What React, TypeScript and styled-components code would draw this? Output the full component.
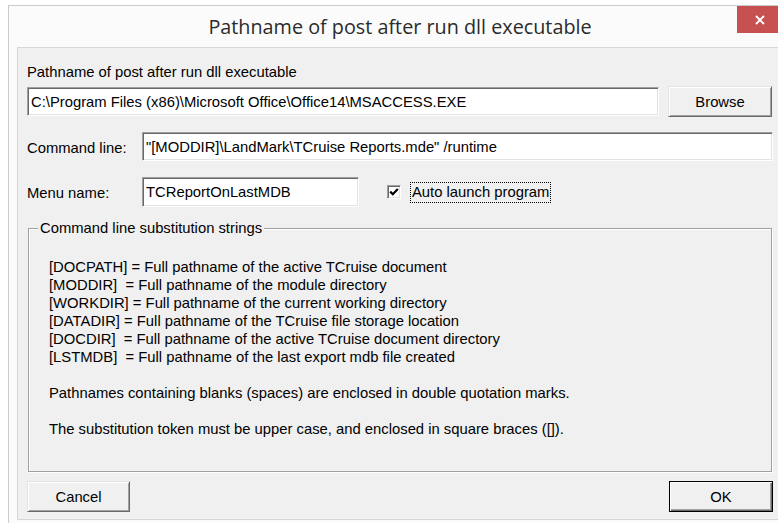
import React from "react";
import styled, { createGlobalStyle } from "styled-components";

const GlobalStyle = createGlobalStyle`
    html, body {
        margin: 0;
        padding: 0;
        background: #ffffff;
        overflow: hidden;
    }
    body {
        font-family: "Liberation Sans", Arial, sans-serif;
        font-size: 14.8px;
        color: #000000;
    }
`;

const Screen = styled.div`
    width: 778px;
    height: 523px;
    padding: 5px 0 0 8px;
    box-sizing: border-box;
    overflow: hidden;
`;

const Window = styled.div`
    width: 784px;
    height: 530px;
    box-sizing: border-box;
    border: 1px solid #cbcbcb;
    background: #fbfbfb;
    padding: 0 8px 8px;
    display: flex;
    flex-direction: column;
`;

const TitleBar = styled.div`
    position: relative;
    height: 41px;
    flex: none;
    display: flex;
    align-items: center;
    justify-content: center;
`;

const Title = styled.span`
    font-family: "Open Sans", "Noto Sans", sans-serif;
    font-size: 19.8px;
    color: #2b2b2b;
`;

// sits over the title bar's right end, like the caption button it is
const CloseButton = styled.div`
    position: absolute;
    top: 0;
    right: 0;
    width: 46px;
    height: 27px;
    background: #c75050;
    display: flex;
    align-items: center;
    justify-content: center;
`;

const Client = styled.div`
    flex: none;
    height: 473px;
    box-sizing: border-box;
    border: 1px solid #d6d6d6;
    background: #f0f0f0;
    padding: 16px 9px 7px;
    display: flex;
    flex-direction: column;
`;

const FieldCaption = styled.div`
    line-height: 17px;
    height: 17px;
    margin-bottom: 5px;
`;

const Row = styled.div<{ $gap?: number }>`
    display: flex;
    align-items: center;
    margin-bottom: ${(p) => p.$gap ?? 15}px;
`;

const RowLabel = styled.div`
    width: 115px;
    flex: none;
    padding-top: 3px;
    line-height: 17px;
`;

const TextBox = styled.input<{ $width?: number; $height?: number }>`
    ${(p) => (p.$width ? `width: ${p.$width}px; flex: none;` : "flex: 1; min-width: 0;")}
    height: ${(p) => p.$height ?? 29}px;
    box-sizing: border-box;
    margin: 0;
    padding: 0 3px;
    font-family: "Liberation Sans", Arial, sans-serif;
    font-size: 14.8px;
    color: #000000;
    background: #ffffff;
    border-style: solid;
    border-width: 1px;
    border-color: #a0a0a0 #ffffff #ffffff #a0a0a0;
    box-shadow: inset 1px 1px 0 #696969, inset -1px -1px 0 #e3e3e3;
    outline: none;
`;

const PushButton = styled.button<{ $default?: boolean; $width?: number }>`
    width: ${(p) => p.$width ?? 104}px;
    height: 31px;
    flex: none;
    box-sizing: border-box;
    margin: 0;
    padding: 0;
    font-family: "Liberation Sans", Arial, sans-serif;
    font-size: 14.8px;
    color: #000000;
    background: #f0f0f0;
    border-style: solid;
    border-width: 1px;
    border-color: ${(p) =>
        p.$default ? "#000000" : "#e3e3e3 #696969 #696969 #e3e3e3"};
    box-shadow: ${(p) =>
        p.$default
            ? "inset 1px 1px 0 #ffffff, inset -1px -1px 0 #696969, inset -2px -2px 0 #a0a0a0"
            : "inset 1px 1px 0 #ffffff, inset -1px -1px 0 #a0a0a0"};
`;

const CheckItem = styled.label`
    display: flex;
    align-items: center;
    margin-left: 28px;
    gap: 9px;
`;

const CheckBox = styled.span`
    width: 14px;
    height: 14px;
    box-sizing: border-box;
    background: #ffffff;
    border-style: solid;
    border-width: 1px;
    border-color: #a0a0a0 #ffffff #ffffff #a0a0a0;
    box-shadow: inset 1px 1px 0 #696969, inset -1px -1px 0 #e3e3e3;
    display: flex;
    align-items: center;
    justify-content: center;
`;

const FocusText = styled.span`
    border: 1px dotted #000000;
    padding: 1px;
    line-height: 17px;
`;

const Group = styled.fieldset`
    flex: 1;
    margin: 13px 1px 0 1px;
    padding: 0;
    border: 1px solid #a0a0a0;
    box-shadow: inset 1px 1px 0 #ffffff, 1px 1px 0 #ffffff;
    min-width: 0;
`;

const GroupCaption = styled.legend`
    margin-left: 9px;
    padding: 0 2px;
    line-height: 17px;
    background: #f0f0f0;
`;

const GroupBody = styled.div`
    padding: 21px 0 0 20px;
`;

const HelpLine = styled.div`
    line-height: 18px;
    height: 18px;
    white-space: pre;
`;

const ButtonBar = styled.div`
    display: flex;
    justify-content: space-between;
    margin-top: 9px;
`;

const tokens = [
    "[DOCPATH] = Full pathname of the active TCruise document",
    "[MODDIR]  = Full pathname of the module directory",
    "[WORKDIR] = Full pathname of the current working directory",
    "[DATADIR] = Full pathname of the TCruise file storage location",
    "[DOCDIR]  = Full pathname of the active TCruise document directory",
    "[LSTMDB]  = Full pathname of the last export mdb file created",
];

const notes = [
    "Pathnames containing blanks (spaces) are enclosed in double quotation marks.",
    "The substitution token must be upper case, and enclosed in square braces ([]).",
];

const App = () => {
    return (
        <>
            <GlobalStyle />
            <Screen>
                <Window>
                    <TitleBar>
                        <Title>Pathname of post after run dll executable</Title>
                        <CloseButton>
                            <svg width="10" height="10" viewBox="0 0 10 10">
                                <path d="M1 1L9 9M9 1L1 9" stroke="#ffffff" strokeWidth="1.8" />
                            </svg>
                        </CloseButton>
                    </TitleBar>
                    <Client>
                        <FieldCaption>Pathname of post after run dll executable</FieldCaption>
                        <Row>
                            <TextBox
                                $width={632}
                                readOnly
                                value="C:\Program Files (x86)\Microsoft Office\Office14\MSACCESS.EXE"
                            />
                            <PushButton style={{ marginLeft: 9 }}>Browse</PushButton>
                        </Row>
                        <Row $gap={16}>
                            <RowLabel>Command line:</RowLabel>
                            <TextBox
                                readOnly
                                value={'"[MODDIR]\\LandMark\\TCruise Reports.mde" /runtime'}
                            />
                        </Row>
                        <Row $gap={0}>
                            <RowLabel>Menu name:</RowLabel>
                            <TextBox $width={217} $height={30} readOnly value="TCReportOnLastMDB" />
                            <CheckItem>
                                <CheckBox>
                                    <svg width="10" height="10" viewBox="0 0 10 10">
                                        <path
                                            d="M1.2 4.6L3.8 7.2L8.8 2"
                                            fill="none"
                                            stroke="#000000"
                                            strokeWidth="2.2"
                                        />
                                    </svg>
                                </CheckBox>
                                <FocusText>Auto launch program</FocusText>
                            </CheckItem>
                        </Row>
                        <Group>
                            <GroupCaption>Command line substitution strings</GroupCaption>
                            <GroupBody>
                                {tokens.map((t) => (
                                    <HelpLine key={t}>{t}</HelpLine>
                                ))}
                                <HelpLine />
                                <HelpLine>{notes[0]}</HelpLine>
                                <HelpLine />
                                <HelpLine>{notes[1]}</HelpLine>
                            </GroupBody>
                        </Group>
                        <ButtonBar>
                            <PushButton $width={103}>Cancel</PushButton>
                            <PushButton $default>OK</PushButton>
                        </ButtonBar>
                    </Client>
                </Window>
            </Screen>
        </>
    );
};

export default App;
